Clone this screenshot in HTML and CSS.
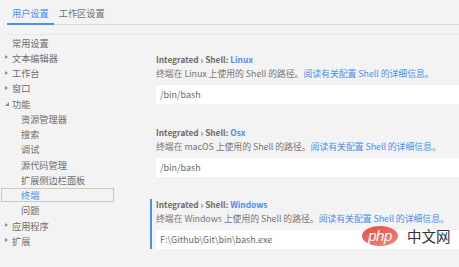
FILE: index.html
```html
<!DOCTYPE html>
<html lang="zh-CN">
<head>
<meta charset="utf-8">
<link rel="stylesheet" href="styles.css">
</head>
<body>
<div class="page">
  <div class="tabs">
    <div class="tab active">用户设置</div>
    <div class="tab">工作区设置</div>
  </div>
  <div class="main">
    <ul class="tree">
      <li class="row top">常用设置</li>
      <li class="row top"><span class="tri closed"></span>文本编辑器</li>
      <li class="row top"><span class="tri closed"></span>工作台</li>
      <li class="row top"><span class="tri closed"></span>窗口</li>
      <li class="row top"><span class="tri open"></span>功能</li>
      <li class="row sub">资源管理器</li>
      <li class="row sub">搜索</li>
      <li class="row sub">调试</li>
      <li class="row sub">源代码管理</li>
      <li class="row sub">扩展侧边栏面板</li>
      <li class="row sub selected">终端</li>
      <li class="row sub">问题</li>
      <li class="row top"><span class="tri closed"></span>应用程序</li>
      <li class="row top"><span class="tri closed"></span>扩展</li>
    </ul>
    <div class="settings">
      <div class="setting">
        <div class="title">Integrated › Shell: <span class="key">Linux</span></div>
        <div class="desc">终端在 Linux 上使用的 Shell 的路径。<span class="link">阅读有关配置 Shell 的详细信息。</span></div>
        <div class="input">/bin/bash</div>
      </div>
      <div class="setting">
        <div class="title">Integrated › Shell: <span class="key">Osx</span></div>
        <div class="desc">终端在 macOS 上使用的 Shell 的路径。<span class="link">阅读有关配置 Shell 的详细信息。</span></div>
        <div class="input">/bin/bash</div>
      </div>
      <div class="setting focused">
        <div class="title">Integrated › Shell: <span class="key">Windows</span></div>
        <div class="desc">终端在 Windows 上使用的 Shell 的路径。<span class="link">阅读有关配置 Shell 的详细信息。</span></div>
        <div class="input">F:\Github\Git\bin\bash.exe</div>
      </div>
    </div>
  </div>
  <div class="watermark"><span class="php">php</span><span class="cn">中文网</span></div>
</div>
</body>
</html>
```
FILE: styles.css
```css
* { box-sizing: border-box; }
html, body { margin: 0; padding: 0; }
body {
  background: #f3f3f3;
  font-family: "Noto Sans CJK SC", "Noto Sans", sans-serif;
  color: #6e6e6e;
  width: 459px;
  height: 267px;
  overflow: hidden;
}
.page { position: relative; width: 459px; height: 267px; }
.tabs {
  display: flex;
  margin-left: 7px;
  height: 25px;
  border-bottom: 1px solid #d8d8d8;
  padding-top: 7px;
}
.tab {
  font-size: 9.2px;
  line-height: 12px;
  padding: 0 5px;
  height: 18px;
  color: #707070;
}
.tab.active {
  color: #4a8ff0;
  border-bottom: 2px solid #4a8ff0;
}
.main {
  display: flex;
  margin-top: 9px;
  margin-left: 7px;
  border-top: 1px solid #e8e8e8;
}
.tree {
  list-style: none;
  margin: 0 0 0 -6px;
  padding: 0;
  width: 113px;
  flex: none;
}
.row {
  display: flex;
  align-items: center;
  height: 15.26px;
  font-size: 9.2px;
  color: #6e6e6e;
  white-space: nowrap;
}
.row.top { padding-left: 11px; position: relative; }
.row.sub { padding-left: 20px; }
.row.selected {
  border: 1px solid #c8cbb9;
  color: #4a8ff0;
  padding-left: 19px;
  height: 14px;
  margin-bottom: 1.26px;
}
.tri {
  position: absolute;
  left: 4px;
  top: 5px;
  width: 0; height: 0;
}
.tri.closed {
  border-top: 2.5px solid transparent;
  border-bottom: 2.5px solid transparent;
  border-left: 3px solid #8a8a8a;
}
.tri.open {
  top: 6px;
  border-left: 4px solid transparent;
  border-bottom: 4px solid #8a8a8a;
}
.settings {
  flex: 1;
  min-width: 0;
  padding-top: 19px;
  padding-left: 42px;
  display: flex;
  flex-direction: column;
  gap: 22.5px;
}
.setting {
  position: relative;
  height: 50px;
  padding-left: 6px;
  display: flex;
  flex-direction: column;
  margin-left: -6px;
}
.setting.focused { border-left: 2px solid #4a8ff0; padding-left: 4px; }
.title {
  font-size: 8.3px;
  font-weight: 600;
  line-height: 10px;
  color: #6b6b6b;
  white-space: nowrap;
}
.key { color: #4a8ff0; }
.desc {
  margin-top: 4px;
  font-size: 8.9px;
  line-height: 11px;
  color: #777;
  white-space: nowrap;
  letter-spacing: -0.05px;
}
.link { color: #4a8ff0; }
.input {
  margin-top: 6px;
  height: 19px;
  background: #fff;
  font-size: 9px;
  line-height: 19px;
  padding-left: 4px;
  color: #6a6a6a;
  margin-right: -8px;
}
.watermark {
  position: absolute;
  left: 362px;
  top: 226px;
  display: flex;
  align-items: center;
  gap: 9px;
}
.php {
  width: 36px;
  height: 20px;
  border-radius: 50%;
  background: linear-gradient(160deg, #e24b41, #f08a7e);
  color: #fff;
  font-family: "Liberation Sans", sans-serif;
  font-style: italic;
  font-size: 15px;
  line-height: 19px;
  text-align: center;
  letter-spacing: -0.5px;
}
.cn {
  font-size: 14.5px;
  color: #333;
  line-height: 18px;
}
```
